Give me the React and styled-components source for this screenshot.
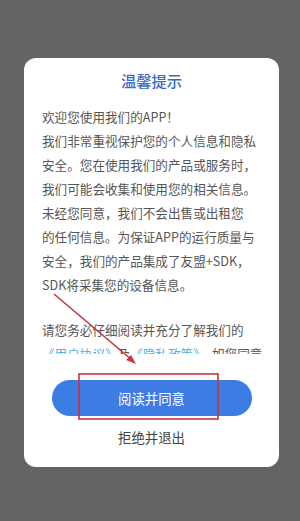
import React from 'react';
import styled, { createGlobalStyle } from 'styled-components';

const GlobalStyle = createGlobalStyle`
  html, body {
    margin: 0;
    padding: 0;
  }
  body {
    font-family: "Noto Sans CJK SC", "Noto Sans", sans-serif;
  }
`;

const Page = styled.div`
  position: relative;
  width: 300px;
  height: 521px;
  box-sizing: border-box;
  padding: 58px 0 0 24px;
  background: #646464;
  overflow: hidden;
`;

const Card = styled.section`
  width: 255px;
  height: 409px;
  background: #fff;
  border-radius: 12px;
  display: flex;
  flex-direction: column;
  align-items: center;
`;

const Title = styled.h2`
  margin: 11px 0 0;
  font-size: 15.3px;
  line-height: 22px;
  font-weight: 500;
  color: #3b6cc2;
  text-align: center;
`;

const Scroll = styled.div`
  align-self: stretch;
  margin-top: 14px;
  padding: 0 18px;
  height: 249px;
  overflow: hidden;
`;

const Paragraph = styled.div`
  margin-top: ${(props) => (props.gap ? `${props.gap}px` : '0')};
`;

const Line = styled.div`
  font-size: 12.6px;
  line-height: 24px;
  color: #575757;
  white-space: nowrap;
`;

const Link = styled.span`
  color: #58b0e2;
`;

const AgreeButton = styled.button`
  margin-top: 26px;
  width: 200px;
  height: 36px;
  border: none;
  border-radius: 18px;
  background: #3d7ce3;
  color: #fff;
  font-family: inherit;
  font-size: 13.4px;
  padding: 0;
  cursor: pointer;
`;

const RefuseButton = styled.button`
  margin-top: 11px;
  border: none;
  background: none;
  padding: 0;
  font-family: inherit;
  font-size: 13.4px;
  line-height: 20px;
  color: #444;
  cursor: pointer;
`;

const Annotation = styled.svg`
  position: absolute;
  left: 0;
  top: 0;
  pointer-events: none;
`;

const mainLines = [
  '欢迎您使用我们的APP！',
  '我们非常重视保护您的个人信息和隐私',
  '安全。您在使用我们的产品或服务时，',
  '我们可能会收集和使用您的相关信息。',
  '未经您同意，我们不会出售或出租您',
  '的任何信息。为保证APP的运行质量与',
  '安全，我们的产品集成了友盟+SDK，',
  'SDK将采集您的设备信息。',
];

const App = () => (
  <>
    <GlobalStyle />
    <Page>
      <Card>
        <Title>温馨提示</Title>
        <Scroll>
          <Paragraph>
            {mainLines.map((text) => (
              <Line key={text}>{text}</Line>
            ))}
          </Paragraph>
          <Paragraph gap={21}>
            <Line>请您务必仔细阅读并充分了解我们的</Line>
            <Line>
              <Link>《用户协议》</Link>及<Link>《隐私政策》</Link>，如您同意
            </Line>
          </Paragraph>
        </Scroll>
        <AgreeButton>阅读并同意</AgreeButton>
        <RefuseButton>拒绝并退出</RefuseButton>
      </Card>
      <Annotation width="300" height="521" viewBox="0 0 300 521">
        <line x1="54" y1="294" x2="132" y2="360" stroke="#c9333d" strokeWidth="1.6" />
        <polygon points="136,364 126,360 131,355" fill="#c9333d" />
        <rect x="79" y="374" width="139" height="45" fill="none" stroke="#c9333d" strokeWidth="1.6" />
      </Annotation>
    </Page>
  </>
);

export default App;
